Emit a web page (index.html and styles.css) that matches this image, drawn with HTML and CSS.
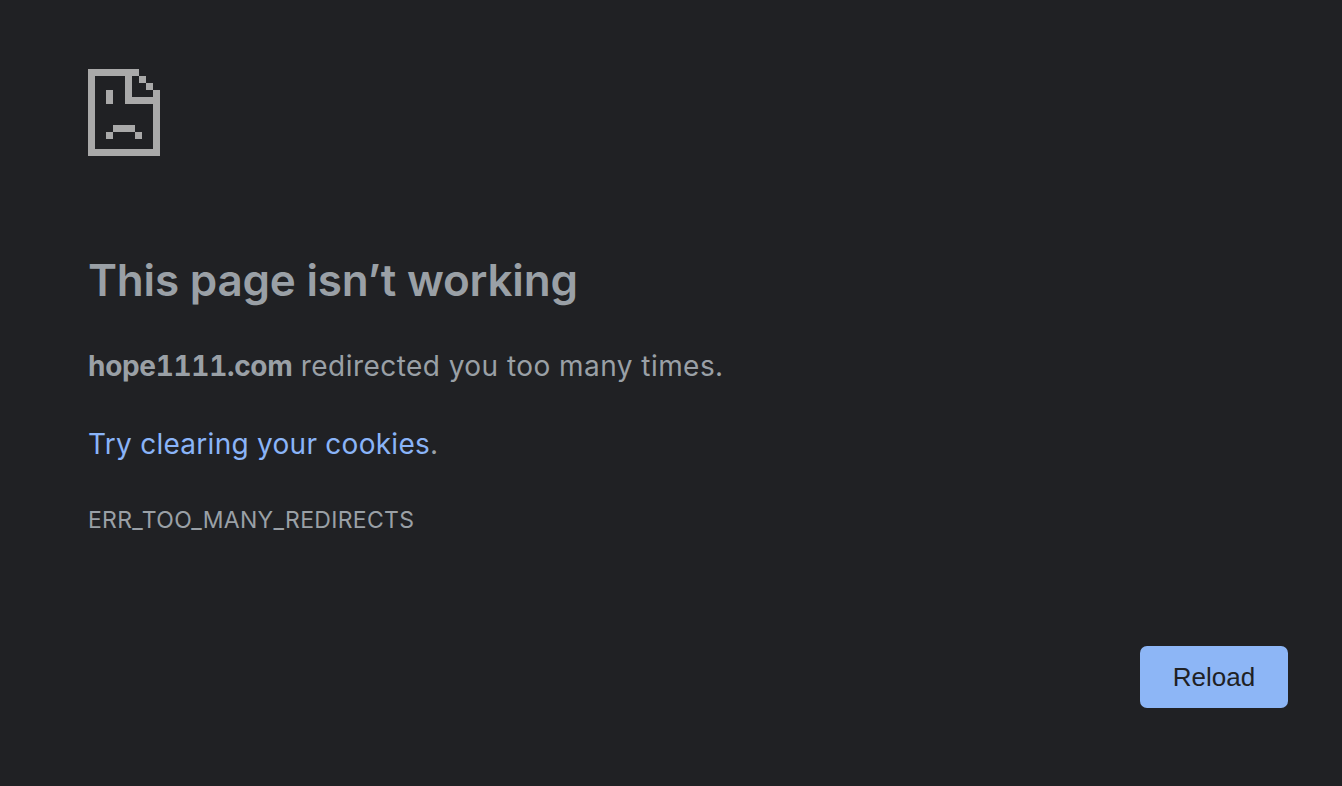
FILE: index.html
```html
<!DOCTYPE html>
<html lang="en">

<head>
    <meta charset="UTF-8">
    <meta name="viewport" content="width=device-width, initial-scale=1.0">
    <title>hope1111.com</title>
    <link rel="stylesheet" href="styles.css">
</head>

<body>

    <div class="page">
        <!-- Sad page icon -->
        <svg class="error-icon" width="72" height="87" viewBox="0 0 72 87" fill="#a9a9a9" aria-hidden="true">
            <path d="M0 0H51V7H58V14H65V21H72V87H0Z M7 7V80H65V35H37V7Z M44 7V28H65V21H58V14H51V7Z" fill-rule="evenodd"/>
            <rect x="18" y="21" width="7" height="14"/>
            <rect x="25" y="56" width="22" height="7"/>
            <rect x="18" y="63" width="7" height="7"/>
            <rect x="47" y="63" width="7" height="7"/>
        </svg>

        <h1 class="title">This page isn’t working</h1>
        <p class="summary summary-main"><strong class="host">hope1111.com</strong> redirected you too many times.</p>
        <p class="summary"><a href="#" class="link">Try clearing your cookies</a>.</p>
        <div class="error-code">ERR_TOO_MANY_REDIRECTS</div>

        <div class="actions">
            <button class="reload-btn">Reload</button>
        </div>
    </div>

</body>

</html>
```

FILE: styles.css
```css
/* General Styles */
html, body {
    margin: 0;
    padding: 0;
    background-color: #202124;
}

body {
    font-family: Inter, "Liberation Sans", sans-serif;
    color: #9aa0a6;
    height: 786px;
    overflow: hidden;
}

.page {
    padding: 69px 54px 0 88px;
}

.error-icon {
    display: block;
}

.title {
    margin: 94px 0 0;
    font-size: 44px;
    line-height: 60px;
    font-weight: 600;
    letter-spacing: -0.2px;
    color: #9aa0a6;
}

.summary {
    margin: 0;
    font-size: 28px;
    line-height: 40px;
    letter-spacing: 0.27px;
}

.summary-main {
    margin-top: 36px;
    letter-spacing: 0.45px;
}

.host {
    font-feature-settings: "tnum";
    font-weight: 700;
    letter-spacing: -0.3px;
}

.summary + .summary {
    margin-top: 38px;
}

.link {
    color: #8ab4f8;
    text-decoration: none;
}

.error-code {
    margin-top: 41px;
    font-size: 23px;
    line-height: 30px;
    letter-spacing: 0.3px;
}

/* Reload button */
.actions {
    display: flex;
    justify-content: flex-end;
    margin-top: 111px;
}

.reload-btn {
    width: 148px;
    height: 62px;
    padding: 0;
    background-color: #8db6f6;
    color: #202124;
    border: none;
    border-radius: 7px;
    font-family: "Liberation Sans", Arial, sans-serif;
    font-size: 26px;
    cursor: pointer;
}
```
